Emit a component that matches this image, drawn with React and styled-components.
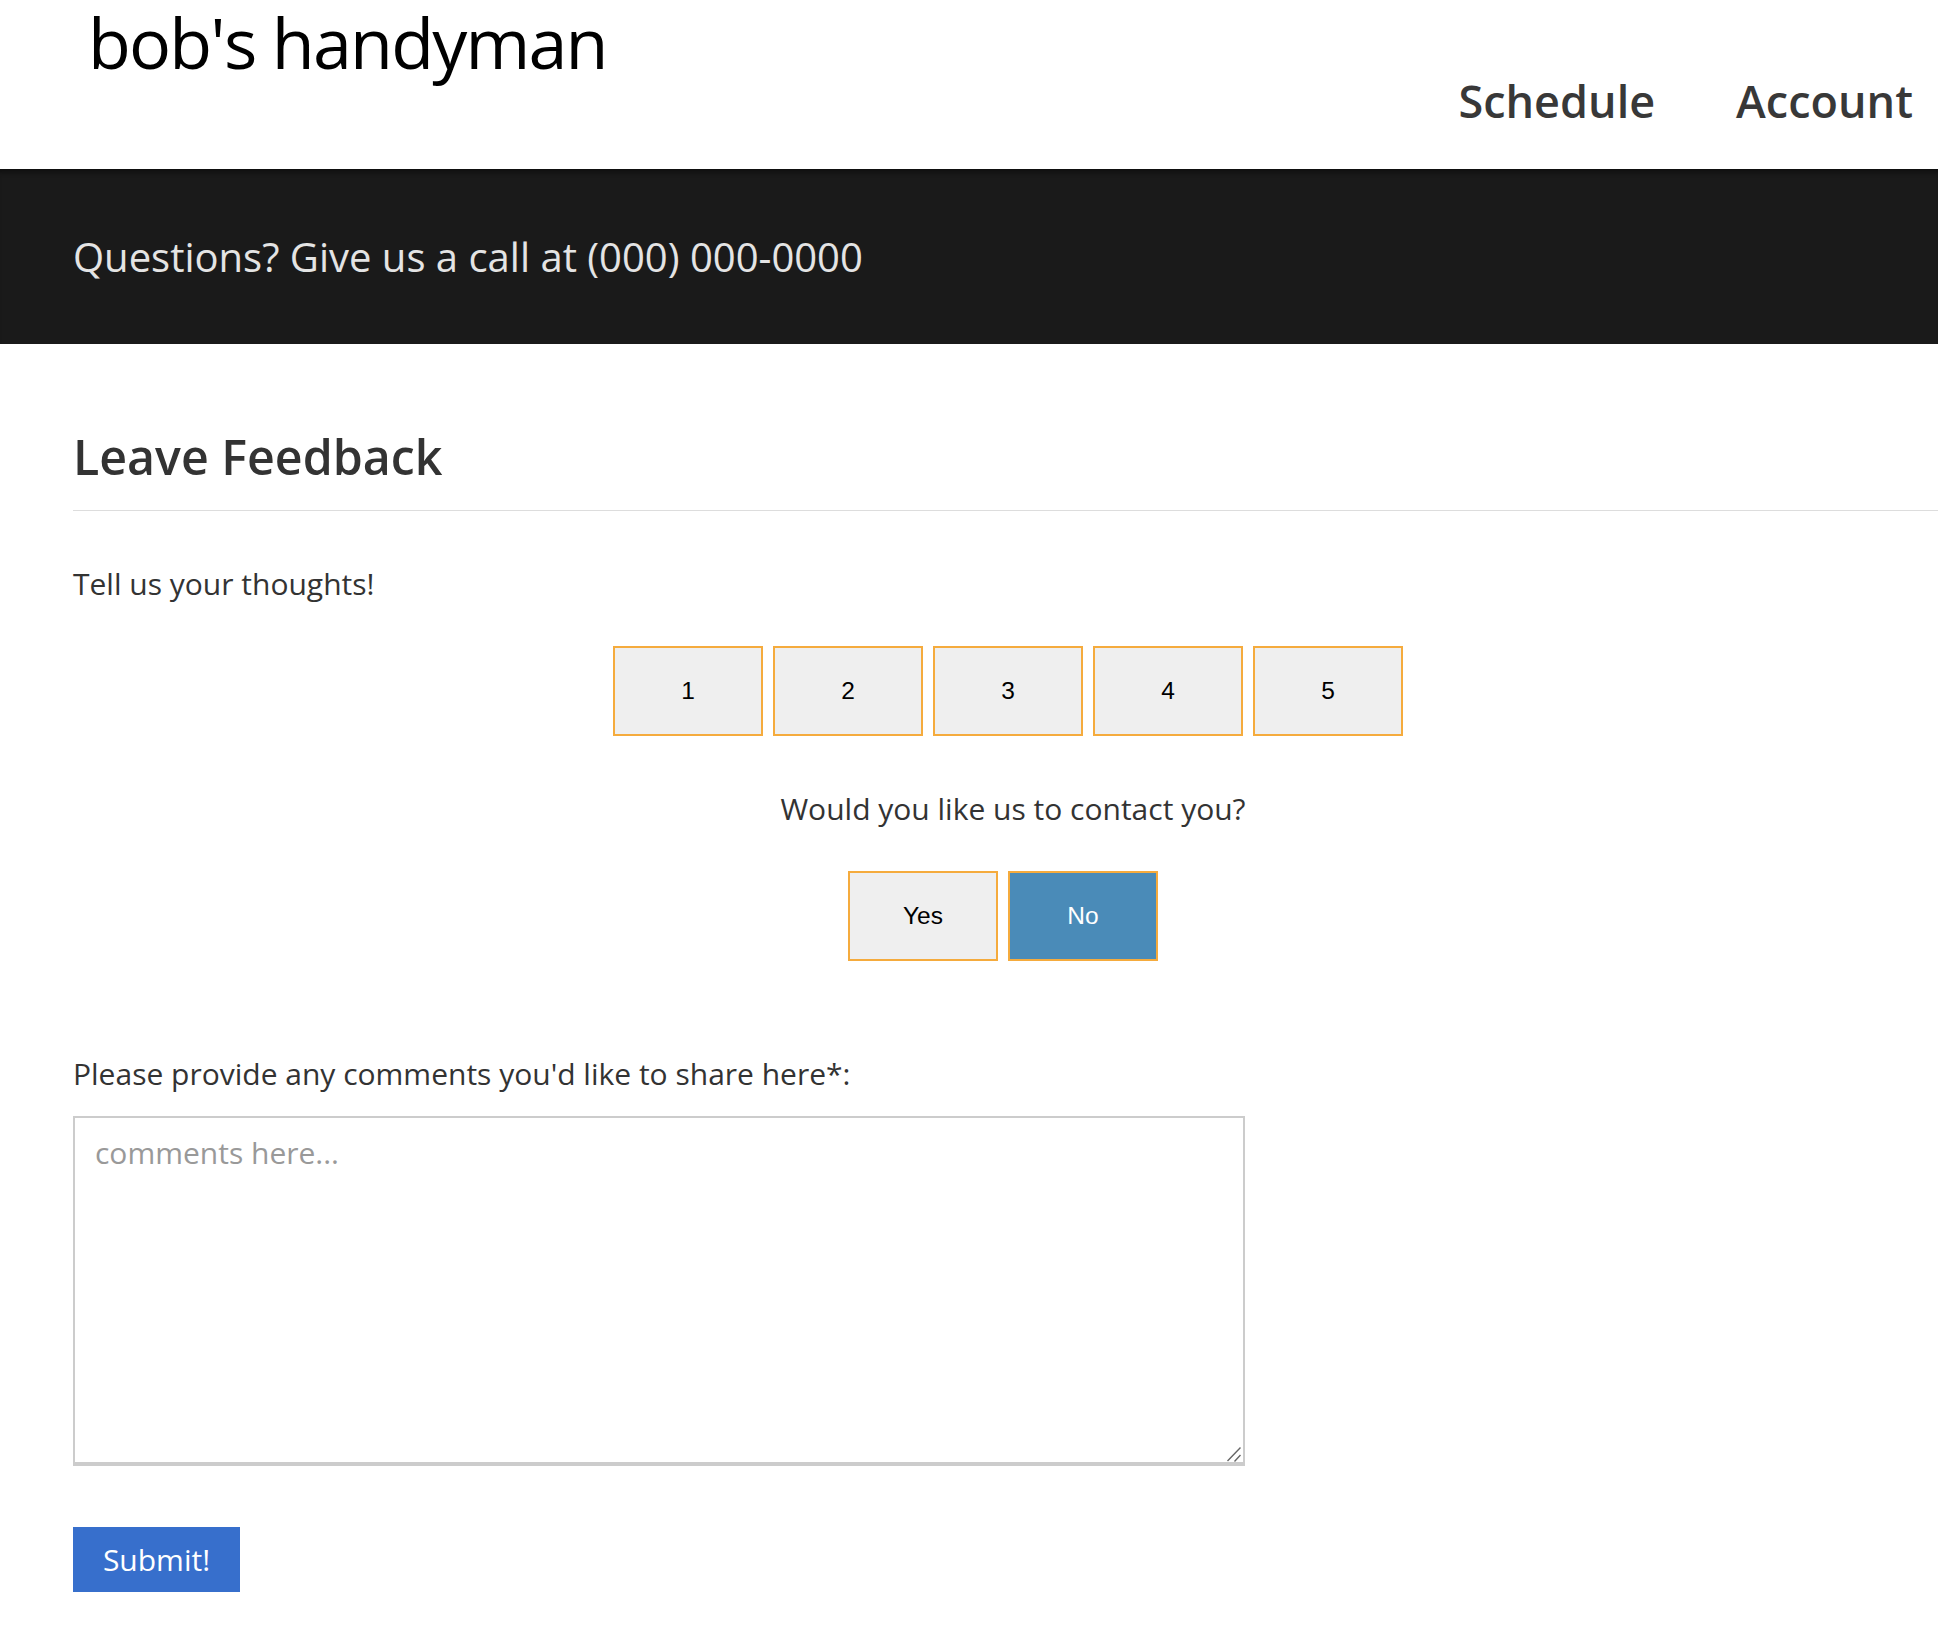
import styled, { createGlobalStyle } from "styled-components"

const Global = createGlobalStyle`
html, body {
  margin: 0;
  padding: 0;
  background: #fff;
  overflow-x: hidden;
}
* { box-sizing: border-box; }
`

const Page = styled.div`
width: 1938px;
height: 1630px;
overflow: hidden;
font-family: "Open Sans", sans-serif;
color: #333;
`
const Header = styled.header`
height: 169px;
display: flex;
justify-content: space-between;
padding: 0 25px 0 88px;
`
const Logo = styled.div`
font-family: "Open Sans", sans-serif;
font-size: 70px;
line-height: 84px;
letter-spacing: -1.8px;
color: #000;
`
const Nav = styled.nav`
display: flex;
gap: 81px;
padding-top: 71px;
`
const NavLink = styled.a`
font-size: 45px;
font-weight: 600;
line-height: 60px;
color: #383838;
`
const Banner = styled.div`
height: 175px;
background: #1a1a1a;
box-shadow: inset 0 7px 5px -4px #0e0e0e;
color: #e4e4e4;
font-size: 40px;
font-weight: 400;
line-height: 54px;
padding: 61px 0 0 73px;
`
const Main = styled.main`
padding: 0 0 0 73px;
width: 1943px;
`
const Heading = styled.h1`
margin: 0;
padding-top: 79px;
height: 167px;
font-size: 48.3px;
font-weight: 600;
line-height: 66px;
color: #333;
border-bottom: 1px solid #ddd;
`
const Text = styled.p`
margin: 0;
font-size: 30px;
line-height: 40px;
color: #333;
`
const Intro = styled(Text)`
padding-top: 53px;
`
const Centered = styled.div`
display: flex;
justify-content: center;
gap: 10px;
padding-top: ${(p) => p.$top}px;
padding-right: ${(p) => p.$right || 0}px;
`
const Choice = styled.button`
width: 150px;
height: 90px;
padding: 0;
border: 2px solid #f5ab3d;
border-radius: 0;
background: ${(p) => (p.$active ? "#4a8bb8" : "#efefef")};
color: ${(p) => (p.$active ? "#fff" : "#000")};
font-family: "Liberation Sans", Arial, sans-serif;
font-size: 24.5px;
`
const Question = styled(Text)`
padding: 53px 0 0 10px;
text-align: center;
`
const Label = styled(Text)`
padding-top: 93px;
`
const CommentsBox = styled.div`
position: relative;
width: 1172px;
height: 350px;
margin-top: 22px;
`
const Comments = styled.textarea`
display: block;
width: 100%;
height: 100%;
padding: 15px 20px;
border: 2px solid #ccc;
border-bottom-width: 4px;
border-radius: 0;
outline: none;
resize: none;
font-family: "Open Sans", sans-serif;
font-size: 30px;
line-height: 40px;
color: #333;
&::placeholder { color: #999; opacity: 1; }
`
// the grip sits over the corner of the textarea
const Grip = styled.svg`
position: absolute;
right: 4px;
bottom: 4px;
width: 14px;
height: 15px;
pointer-events: none;
`
const Submit = styled.button`
display: block;
width: 167px;
height: 65px;
margin-top: 61px;
padding: 0;
border: none;
border-radius: 0;
background: #376fcc;
color: #fff;
font-family: "Open Sans", sans-serif;
font-size: 30px;
`

const App = () => {
  return (
    <Page>
      <Global />
      <Header>
        <Logo>bob's handyman</Logo>
        <Nav>
          <NavLink>Schedule</NavLink>
          <NavLink>Account</NavLink>
        </Nav>
      </Header>
      <Banner>Questions? Give us a call at (000) 000-0000</Banner>
      <Main>
        <Heading>Leave Feedback</Heading>
        <Intro>Tell us your thoughts!</Intro>
        <Centered $top={42}>
          {[1, 2, 3, 4, 5].map((n) => (
            <Choice key={n}>{n}</Choice>
          ))}
        </Centered>
        <Question>Would you like us to contact you?</Question>
        <Centered $top={42} $right={10}>
          <Choice>Yes</Choice>
          <Choice $active>No</Choice>
        </Centered>
        <Label>Please provide any comments you'd like to share here*:</Label>
        <CommentsBox>
          <Comments placeholder="comments here..." />
          <Grip viewBox="0 0 14 15">
            <path d="M0.5 14 L13.5 0.5 M7.5 14.5 L13.5 8" stroke="#666" strokeWidth="1.4" fill="none" />
          </Grip>
        </CommentsBox>
        <Submit>Submit!</Submit>
      </Main>
    </Page>
  )
}

export default App
